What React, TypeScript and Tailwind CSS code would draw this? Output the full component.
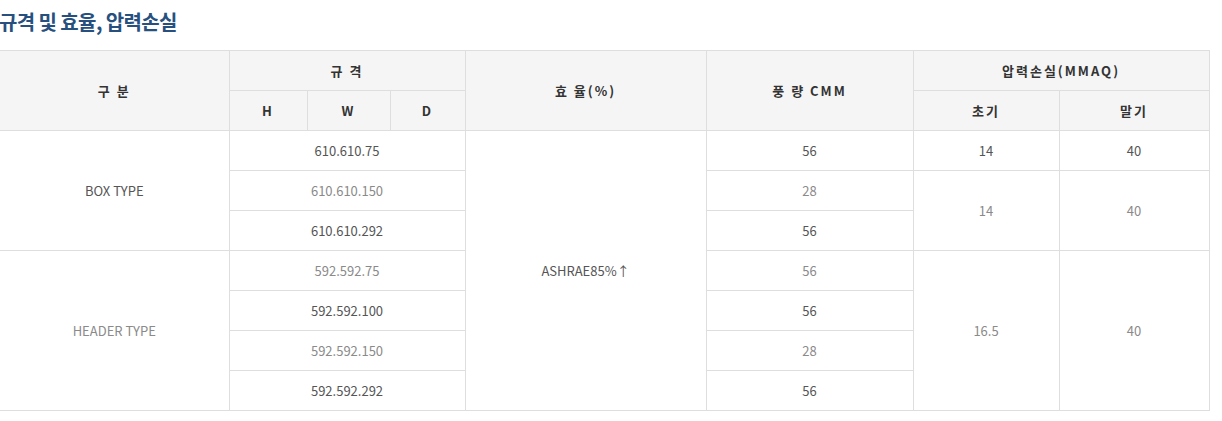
import React from "react";

const font = { fontFamily: '"Noto Sans CJK KR", "Noto Sans", sans-serif' };

const DARK = "text-[#555555]";
const LIGHT = "text-[#8a8a8a]";

export default function App() {
  const th = "border border-[#dedede] bg-[#f5f5f5] text-[13px] font-bold text-[#333333] tracking-[2px] text-center align-middle p-0";
  const td = "border border-[#dedede] text-[13px] text-center align-middle p-0 h-[40px]";
  return (
    <div className="w-[1222px] h-[421px] bg-white overflow-hidden" style={font}>
      <h2 className="text-[20px] font-bold text-[#27507e] leading-[26px] pt-[9px] pb-[15px] -ml-[1px] tracking-[-0.6px]">
        규격 및 효율, 압력손실
      </h2>
      <table className="border-collapse table-fixed w-[1209px]">
        <colgroup>
          <col className="w-[229px]" />
          <col className="w-[78px]" />
          <col className="w-[83px]" />
          <col className="w-[75px]" />
          <col className="w-[241px]" />
          <col className="w-[207px]" />
          <col className="w-[146px]" />
          <col className="w-[150px]" />
        </colgroup>
        <thead>
          <tr className="h-[40px]">
            <th rowSpan={2} className={th + " border-l-0"}>구 분</th>
            <th colSpan={3} className={th}>규 격</th>
            <th rowSpan={2} className={th}>효 율(%)</th>
            <th rowSpan={2} className={th}>풍 량 CMM</th>
            <th colSpan={2} className={th}>압력손실(MMAQ)</th>
          </tr>
          <tr className="h-[40px]">
            <th className={th}>H</th>
            <th className={th}>W</th>
            <th className={th}>D</th>
            <th className={th}>초기</th>
            <th className={th}>말기</th>
          </tr>
        </thead>
        <tbody>
          <tr>
            <td rowSpan={3} className={td + " border-l-0 " + DARK}>BOX TYPE</td>
            <td colSpan={3} className={td + " " + DARK}>610.610.75</td>
            <td rowSpan={7} className={td + " " + DARK}>ASHRAE85%↑</td>
            <td className={td + " " + DARK}>56</td>
            <td className={td + " " + DARK}>14</td>
            <td className={td + " " + DARK}>40</td>
          </tr>
          <tr>
            <td colSpan={3} className={td + " " + LIGHT}>610.610.150</td>
            <td className={td + " " + LIGHT}>28</td>
            <td rowSpan={2} className={td + " " + LIGHT}>14</td>
            <td rowSpan={2} className={td + " " + LIGHT}>40</td>
          </tr>
          <tr>
            <td colSpan={3} className={td + " " + DARK}>610.610.292</td>
            <td className={td + " " + DARK}>56</td>
          </tr>
          <tr>
            <td rowSpan={4} className={td + " border-l-0 " + LIGHT}>HEADER TYPE</td>
            <td colSpan={3} className={td + " " + LIGHT}>592.592.75</td>
            <td className={td + " " + LIGHT}>56</td>
            <td rowSpan={4} className={td + " " + LIGHT}>16.5</td>
            <td rowSpan={4} className={td + " " + LIGHT}>40</td>
          </tr>
          <tr>
            <td colSpan={3} className={td + " " + DARK}>592.592.100</td>
            <td className={td + " " + DARK}>56</td>
          </tr>
          <tr>
            <td colSpan={3} className={td + " " + LIGHT}>592.592.150</td>
            <td className={td + " " + LIGHT}>28</td>
          </tr>
          <tr>
            <td colSpan={3} className={td + " " + DARK}>592.592.292</td>
            <td className={td + " " + DARK}>56</td>
          </tr>
        </tbody>
      </table>
    </div>
  );
}
